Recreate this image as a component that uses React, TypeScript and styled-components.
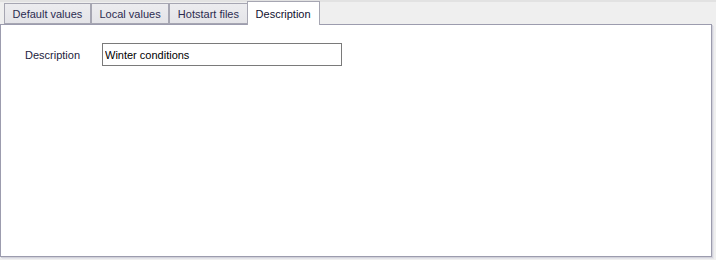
import React from 'react';
import styled, { createGlobalStyle } from 'styled-components';

const GlobalStyle = createGlobalStyle`
  html, body {
    margin: 0;
    padding: 0;
    background: #f0f0f0;
  }
  body {
    font-family: "Liberation Sans", Arial, sans-serif;
    font-size: 11px;
  }
`;

const tabs = ['Default values', 'Local values', 'Hotstart files', 'Description'];
const activeTab = 3;

const App: React.FC = () => {
  return (
    <>
      <GlobalStyle />
      <Window>
        <TabStrip>
          {tabs.map((t, i) => (
            <Tab key={t} $active={i === activeTab}>
              {t}
            </Tab>
          ))}
        </TabStrip>
        <Panel>
          <FieldRow>
            <FieldLabel>Description</FieldLabel>
            <TextInput defaultValue="Winter conditions" />
          </FieldRow>
        </Panel>
      </Window>
    </>
  );
};

export default App;

const Window = styled.div`
  box-sizing: border-box;
  width: 716px;
  height: 260px;
  border-top: 2px solid #e2e2e2;
  background: #efefef;
`;

const TabStrip = styled.div`
  display: flex;
  align-items: flex-end;
  height: 22px;
  padding-left: 4px;
  position: relative;
  z-index: 1;
`;

const Tab = styled.div<{ $active?: boolean }>`
  box-sizing: border-box;
  height: ${(p) => (p.$active ? '24px' : '21px')};
  margin-bottom: ${(p) => (p.$active ? '-1px' : '0')};
  padding: 0 ${(p) => (p.$active ? '8px' : '7.6px')};
  margin-left: ${(p) => (p.$active ? '-1px' : '0')};
  display: flex;
  align-items: center;
  border: 1px solid #a6a6b2;
  border-bottom: ${(p) => (p.$active ? 'none' : '1px solid #a6a6b2')};
  background: ${(p) => (p.$active ? '#ffffff' : 'linear-gradient(#ececef, #e4e4e8)')};
  color: ${(p) => (p.$active ? '#101030' : '#2c2c50')};
  white-space: nowrap;
`;

const Panel = styled.div`
  box-sizing: border-box;
  width: 712px;
  height: 233px;
  background: #ffffff;
  border: 1px solid #9c9cae;
  box-shadow: 1px 1px 0 #d2d2da, 2px 2px 0 #e4e4ea;
  padding: 18px 0 0 24px;
`;

const FieldRow = styled.div`
  display: flex;
  align-items: center;
`;

const FieldLabel = styled.label`
  width: 77px;
  color: #1c1c40;
`;

const TextInput = styled.input`
  box-sizing: border-box;
  width: 240px;
  height: 23px;
  padding: 0 2px;
  border: 1px solid #7a7a7a;
  font-family: "Liberation Sans", Arial, sans-serif;
  font-size: 11px;
  color: #000000;
  outline: none;
`;
